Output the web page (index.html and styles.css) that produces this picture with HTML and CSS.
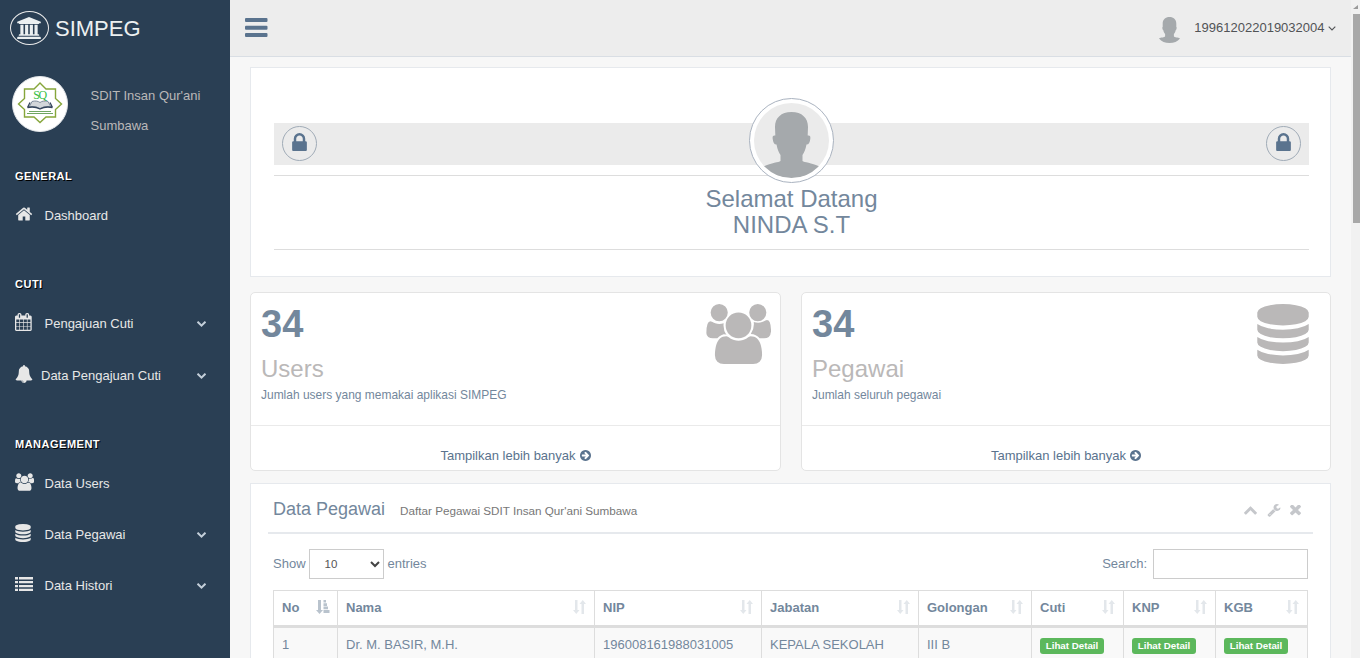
FILE: index.html
```
<!DOCTYPE html>
<html lang="id">
<head>
<meta charset="utf-8">
<title>SIMPEG</title>
<link rel="stylesheet" href="styles.css">
</head>
<body>
<svg class="sprite" width="0" height="0">
  <symbol id="bank" viewBox="0 0 1920 1792"><path d="M960 0l960 384v128h-128q0 26-20.500 45t-48.500 19h-1526q-28 0-48.500-19t-20.500-45h-128v-128zm-704 640h256v768h128v-768h256v768h128v-768h256v768h128v-768h256v768h59q28 0 48.500 19t20.500 45v64h-1664v-64q0-26 20.500-45t48.500-19h59v-768zm1595 960q28 0 48.500 19t20.500 45v128h-1920v-128q0-26 20.500-45t48.500-19h1782z"/></symbol>
  <symbol id="home" viewBox="0 0 1792 1792"><path d="M1472 992v480q0 26-19 45t-45 19h-384v-384h-256v384h-384q-26 0-45-19t-19-45v-480q0-1 .5-3t.5-3l575-474 575 474q1 2 1 6zm223-69l-62 74q-8 9-21 11h-3q-13 0-21-7l-692-577-692 577q-12 8-24 7-13-2-21-11l-62-74q-8-10-7-23.500t11-21.500l719-599q32-26 76-26t76 26l244 204v-195q0-14 9-23t23-9h192q14 0 23 9t9 23v408l219 182q10 8 11 21.500t-7 23.500z"/></symbol>
  <symbol id="calendar" viewBox="64 0 1792 1792"><path d="M192 1664h288v-288h-288v288zm352 0h320v-288h-320v288zm-352-352h288v-320h-288v320zm352 0h320v-320h-320v320zm-352-384h288v-288h-288v288zm736 736h320v-288h-320v288zm-384-736h320v-288h-320v288zm768 736h288v-288h-288v288zm-384-352h320v-320h-320v320zm-352-864v-288q0-13-9.500-22.500t-22.500-9.500h-64q-13 0-22.500 9.500t-9.500 22.500v288q0 13 9.500 22.500t22.500 9.500h64q13 0 22.500-9.500t9.500-22.500zm736 864h288v-320h-288v320zm-384-384h320v-288h-320v288zm384 0h288v-288h-288v288zm32-480v-288q0-13-9.500-22.500t-22.500-9.500h-64q-13 0-22.500 9.500t-9.500 22.500v288q0 13 9.500 22.500t22.500 9.500h64q13 0 22.500-9.500t9.500-22.500zm384-64v1280q0 52-38 90t-90 38h-1408q-52 0-90-38t-38-90v-1280q0-52 38-90t90-38h128v-96q0-66 47-113t113-47h64q66 0 113 47t47 113v96h384v-96q0-66 47-113t113-47h64q66 0 113 47t47 113v96h128q52 0 90 38t38 90z"/></symbol>
  <symbol id="bell" viewBox="0 0 1792 1792"><path d="M912 1696q0-16-16-16-59 0-101.500-42.500t-42.500-101.500q0-16-16-16t-16 16q0 73 51.500 124.500t124.500 51.500q16 0 16-16zm816-288q0 52-38 90t-90 38h-448q0 106-75 181t-181 75-181-75-75-181h-448q-52 0-90-38t-38-90q50-42 91-88t85-119.500 74.500-158.500 50-206 19.500-260q0-152 117-282.500t307-158.500q-8-19-8-39 0-40 28-68t68-28 68 28 28 68q0 20-8 39 190 28 307 158.500t117 282.500q0 139 19.500 260t50 206 74.500 158.500 85 119.500 91 88z"/></symbol>
  <symbol id="users" viewBox="0 0 1920 1792"><path d="M593 896q-162 5-265 128h-134q-82 0-138-40.500t-56-118.500q0-353 124-353 6 0 43.500 21t97.500 42.500 119 21.500q67 0 133-23-5 37-5 66 0 159 93 293zm1071 637q0 120-73 189.500t-194 69.500h-874q-121 0-194-69.500t-73-189.500q0-53 3.500-103.500t14-109 26.500-108.500 43-97.500 62-81 85.500-53.500 111.500-20q10 0 43 21.500t73 48 107 48 135 21.500 135-21.500 107-48 73-48 43-21.500q61 0 111.500 20t85.500 53.500 62 81 43 97.500 26.500 108.500 14 109 3.500 103.500zm-1024-1277q0 106-75 181t-181 75-181-75-75-181 75-181 181-75 181 75 75 181zm704 384q0 159-112.500 271.500t-271.500 112.500-271.500-112.500-112.500-271.500 112.500-271.500 271.500-112.500 271.500 112.500 112.500 271.500zm576 225q0 78-56 118.500t-138 40.500h-134q-103-123-265-128 93-134 93-293 0-29-5-66 66 23 133 23 59 0 119-21.500t97.500-42.500 43.500-21q124 0 124 353zm-128-609q0 106-75 181t-181 75-181-75-75-181 75-181 181-75 181 75 75 181z"/></symbol>
  <symbol id="database" viewBox="128 0 1536 1792"><path d="M896 768q237 0 443-43t325-127v170q0 69-103 128t-280 93.500-385 34.500-385-34.500-280-93.500-103-128v-170q119 84 325 127t443 43zm0 768q237 0 443-43t325-127v170q0 69-103 128t-280 93.500-385 34.500-385-34.500-280-93.500-103-128v-170q119 84 325 127t443 43zm0-384q237 0 443-43t325-127v170q0 69-103 128t-280 93.500-385 34.500-385-34.500-280-93.500-103-128v-170q119 84 325 127t443 43zm0-1152q208 0 385 34.500t280 93.500 103 128v128q0 69-103 128t-280 93.500-385 34.500-385-34.500-280-93.500-103-128v-128q0-69 103-128t280-93.500 385-34.500z"/></symbol>
  <symbol id="list" viewBox="0 0 18 18"><path d="M0 2h3v2.500H0zM4 2h14v2.500H4zM0 6h3v2.300H0zM4 6h14v2.300H4zM0 10h3v2.200H0zM4 10h14v2.200H4zM0 13.700h3V16H0zM4 13.700h14V16H4z"/></symbol>
  <symbol id="lock" viewBox="320 128 1152 1408"><path d="M640 768h512v-192q0-106-75-181t-181-75-181 75-75 181v192zm832 96v576q0 40-28 68t-68 28h-960q-40 0-68-28t-28-68v-576q0-40 28-68t68-28h32v-192q0-184 132-316t316-132 316 132 132 316v192h32q40 0 68 28t28 68z"/></symbol>
  <symbol id="chevron" viewBox="90 460 1612 1070"><path d="M1683 1331l-166 165q-19 19-45 19t-45-19l-531-531-531 531q-19 19-45 19t-45-19l-166-165q-19-19-19-45.500t19-45.500l742-741q19-19 45-19t45 19l742 741q19 19 19 45.500t-19 45.500z"/></symbol>
  <symbol id="wrench" viewBox="0 0 1792 1792"><path d="M448 1472q0-26-19-45t-45-19-45 19-19 45 19 45 45 19 45-19 19-45zm644-420l-682 682q-37 37-90 37-52 0-91-37l-106-108q-38-36-38-90 0-53 38-91l681-681q39 98 114.500 173.500t173.500 114.500zm634-435q0 39-23 106-47 134-164.500 217.500t-258.500 83.500q-185 0-316.500-131.500t-131.500-316.500 131.500-316.500 316.500-131.500q58 0 121.500 16.500t107.500 46.500q16 11 16 28t-16 28l-293 169v224l193 107q5-3 79-48.500t135.500-81 70.500-35.500q15 0 23.500 10t8.500 25z"/></symbol>
  <symbol id="times" viewBox="300 430 1192 1192"><path d="M1490 1322q0 40-28 68l-136 136q-28 28-68 28t-68-28l-294-294-294 294q-28 28-68 28t-68-28l-136-136q-28-28-28-68t28-68l294-294-294-294q-28-28-28-68t28-68l136-136q28-28 68-28t68 28l294 294 294-294q28-28 68-28t68 28l136 136q28 28 28 68t-28 68l-294 294 294 294q28 28 28 68z"/></symbol>
  <symbol id="go" viewBox="128 128 1536 1536"><path d="M1413 896q0-27-18-45l-362-362-91-91q-18-18-45-18t-45 18l-91 91q-18 18-18 45t18 45l189 189h-502q-26 0-45 19t-19 45v128q0 26 19 45t45 19h502l-189 189q-19 19-19 45t19 45l91 91q18 18 45 18t45-18l91-91 362-362q18-18 18-45zm251 0q0 209-103 385.500t-279.500 279.500-385.500 103-385.500-103-279.500-279.500-103-385.500 103-385.500 279.500-279.500 385.500-103 385.500 103 279.500 279.500 103 385.500z"/></symbol>
  <symbol id="sort" viewBox="0 0 13 14"><path d="M2 0h2.500v10H6.500L3.250 14 0 10h2zM8.500 14H11V4h2L9.750 0 6.500 4h2z"/></symbol>
  <symbol id="sort-asc" viewBox="0 0 14 14"><path d="M2 0h3v10h2L3.500 14 0 10h2zM7.500 0H10v2.600H7.500zM7.500 3.300h3.500v2.600H7.500zM7.500 6.600h4.500v2.700H7.500zM7.500 10h6v3H7.500z"/></symbol>
  <symbol id="person" viewBox="0 0 75 75"><path d="M37.500 9C27 9 21 15 21 24l.3 8.500c-2.300-.3-3 .7-2.600 3.500.5 3.500 1.300 5.500 3.800 5.500 1 5 2.300 8 4 10.500V58c-1.500 1.500-9 1.500-17 5.500C17 72 27 75 37.500 75S58 72 65.500 63.500c-8-4-15.500-4-17-5.500v-6c1.700-2.500 3-5.500 4-10.500 2.500 0 3.300-2 3.800-5.500.4-2.800-.3-3.800-2.600-3.500L54 24c0-9-6-15-16.500-15z"/></symbol>
</svg>

<aside class="sidebar">
  <div class="brand">
    <span class="brand-mark"><svg class="i-bank"><use href="#bank"/></svg></span>
    <span>SIMPEG</span>
  </div>
  <div class="school">
    <svg class="school-logo" viewBox="0 0 56 56">
      <circle cx="28" cy="28" r="27.500" fill="#fff" stroke="#e3e6e9"/>
      <path d="M28 7l6 6h9.500v9.500l6 5.500-6 5.500V41H34l-6 5.500-6-5.500h-9.500v-7.500l-6-5.500 6-5.500V13H22z" fill="none" stroke="#86a63a" stroke-width="1.400"/>
      <text x="27.500" y="23" class="logo-letters">SQ</text>
      <path d="M20 25.500c3-1 6-.5 8 1 2-1.500 5-2 8-1l3 5.500c-4-1-8 0-11 1.500-3-1.500-7-2.500-11-1.500z" fill="#d3d6da" stroke="#66758a" stroke-width=".8"/>
      <path d="M15.500 31.500c5-1 9-.5 12.500 1.500 3.500-2 7.500-2.500 12.500-1.500M18 26.500l-2.500 5M38 26.500l2.500 5" fill="none" stroke="#34445c" stroke-width="1.300"/>
      <path d="M17 35.500h22M15 37.500h26" stroke="#6fa662" stroke-width="1.200"/>
    </svg>
    <p class="school-name">SDIT Insan Qur'ani<br>Sumbawa</p>
  </div>
  <nav>
    <section class="menu">
      <h3>GENERAL</h3>
      <a class="item"><svg class="i18"><use href="#home"/></svg><span>Dashboard</span></a>
    </section>
    <section class="menu">
      <h3>CUTI</h3>
      <a class="item"><svg class="i18"><use href="#calendar"/></svg><span>Pengajuan Cuti</span><svg class="caret"><use href="#chevron"/></svg></a>
      <a class="item tight"><svg class="i18"><use href="#bell"/></svg><span>Data Pengajuan Cuti</span><svg class="caret"><use href="#chevron"/></svg></a>
    </section>
    <section class="menu">
      <h3>MANAGEMENT</h3>
      <a class="item"><svg class="i18 wide"><use href="#users"/></svg><span>Data Users</span></a>
      <a class="item"><svg class="i18 slim"><use href="#database"/></svg><span>Data Pegawai</span><svg class="caret"><use href="#chevron"/></svg></a>
      <a class="item"><svg class="i18"><use href="#list"/></svg><span>Data Histori</span><svg class="caret"><use href="#chevron"/></svg></a>
    </section>
  </nav>
</aside>

<div class="page">
  <header class="topbar">
    <svg class="burger" viewBox="0 0 23 20"><rect width="22.500" height="4" rx="1"/><rect y="7.700" width="22.500" height="4" rx="1"/><rect y="15" width="22.500" height="4" rx="1"/></svg>
    <div class="account">
      <svg class="account-photo" viewBox="0 0 21 26"><path d="M10.500 0C6.500 0 3.700 2.500 3.700 6.500v3.300c-.6.200-.5 2.700.6 3.500.4 1.700 1 2.800 1.800 3.700v2.300C5.500 20.800 2 20.300 0 21.500 2.500 24.500 6 26 10.500 26S18.500 24.500 21 21.500c-2-1.200-5.500-.7-6.100-2.200V17c.8-.9 1.400-2 1.800-3.700 1.100-.8 1.200-3.300.6-3.500V6.500C17.300 2.500 14.500 0 10.500 0z"/></svg>
      <span>199612022019032004</span>
      <svg class="angle" viewBox="0 0 8 5"><path d="M.7.700L4 4 7.300.700" fill="none" stroke="#515356" stroke-width="1.100"/></svg>
    </div>
  </header>
  <main>
    <section class="panel welcome">
      <div class="band">
        <span class="lock"><svg><use href="#lock"/></svg></span>
        <span class="photo"><svg><use href="#person"/></svg></span>
        <span class="lock"><svg><use href="#lock"/></svg></span>
      </div>
      <h2>Selamat Datang<br>NINDA S.T</h2>
    </section>

    <div class="tiles">
      <section class="tile">
        <div class="tile-body">
          <div><strong>34</strong><h3>Users</h3><p>Jumlah users yang memakai aplikasi SIMPEG</p></div>
          <svg class="tile-users"><use href="#users"/></svg>
        </div>
        <a class="more">Tampilkan lebih banyak <svg><use href="#go"/></svg></a>
      </section>
      <section class="tile">
        <div class="tile-body">
          <div><strong>34</strong><h3>Pegawai</h3><p>Jumlah seluruh pegawai</p></div>
          <svg class="tile-db"><use href="#database"/></svg>
        </div>
        <a class="more">Tampilkan lebih banyak <svg><use href="#go"/></svg></a>
      </section>
    </div>

    <section class="panel data">
      <div class="data-title">
        <h2>Data Pegawai</h2><small>Daftar Pegawai SDIT Insan Qur'ani Sumbawa</small>
        <div class="tools">
          <svg class="t-up"><use href="#chevron"/></svg>
          <svg class="t-wrench"><use href="#wrench"/></svg>
          <svg class="t-x"><use href="#times"/></svg>
        </div>
      </div>
      <div class="controls">
        <span>Show</span>
        <span class="select">10<svg viewBox="0 0 10 7"><path d="M1 1l4 4 4-4" fill="none" stroke="#444" stroke-width="2"/></svg></span>
        <span>entries</span>
        <label class="search">Search: <input type="text"></label>
      </div>
      <table>
        <colgroup><col class="c-no"><col class="c-nama"><col class="c-nip"><col class="c-jabatan"><col class="c-gol"><col class="c-act"><col class="c-act"><col></colgroup>
        <thead>
          <tr>
            <th><div>No<svg class="asc"><use href="#sort-asc"/></svg></div></th>
            <th><div>Nama<svg><use href="#sort"/></svg></div></th>
            <th><div>NIP<svg><use href="#sort"/></svg></div></th>
            <th><div>Jabatan<svg><use href="#sort"/></svg></div></th>
            <th><div>Golongan<svg><use href="#sort"/></svg></div></th>
            <th><div>Cuti<svg><use href="#sort"/></svg></div></th>
            <th><div>KNP<svg><use href="#sort"/></svg></div></th>
            <th><div>KGB<svg><use href="#sort"/></svg></div></th>
          </tr>
        </thead>
        <tbody>
          <tr>
            <td>1</td><td>Dr. M. BASIR, M.H.</td><td>196008161988031005</td><td>KEPALA SEKOLAH</td><td>III B</td>
            <td><span class="badge">Lihat Detail</span></td><td><span class="badge">Lihat Detail</span></td><td><span class="badge">Lihat Detail</span></td>
          </tr>
        </tbody>
      </table>
    </section>
  </main>
</div>

<div class="scroll"><span class="scroll-up"></span><span class="scroll-thumb"></span></div>
</body>
</html>
```

FILE: styles.css
```
* { box-sizing: border-box; }
body {
  margin: 0; height: 658px; overflow: hidden; display: flex;
  font: 13px/18px "Liberation Sans", Arial, sans-serif;
  color: #73879c; background: #f7f7f7;
}
h2, h3, p { margin: 0; font-weight: 400; }
svg { display: block; flex: none; fill: currentColor; }
.sprite { position: absolute; }

/* Sidebar */
.sidebar { width: 230px; flex: none; background: #2a3f54; color: #e7e7e7; }
.brand { display: flex; align-items: center; gap: 6px; height: 56px; padding-left: 10px; font-size: 22px; line-height: 26px; color: #ecf0f1; }
.brand > span:last-child { padding-top: 1px; }
.brand-mark { width: 39px; height: 34px; border: 1px solid #eaeaea; border-radius: 50%; display: flex; align-items: center; justify-content: center; }
.i-bank { width: 24px; height: 22px; margin: 0 1px 0 0; }
.school { display: flex; align-items: flex-start; height: 90px; padding: 20px 0 0 12px; }
.school-logo { width: 56px; height: 56px; }
.logo-letters { font: 12px "Liberation Serif", serif; fill: #35c045; text-anchor: middle; letter-spacing: -1.500px; }
.school-name { margin: 5px 0 0 22.500px; line-height: 30px; color: #bab8b8; }
nav { padding-top: 20px; }
.menu { margin-bottom: 33px; }
.menu h3 { height: 20px; margin-bottom: 4px; padding-left: 15px; font: bold 11px/20px "Liberation Sans", Arial, sans-serif; letter-spacing: .5px; color: #fff; text-shadow: 1px 1px #000; }
.item { display: flex; align-items: center; height: 51px; padding: 0 24px 0 15px; }
.item + .item.tight { margin-top: 1px; }
.item span { flex: 1; margin-left: 11.500px; }
.item.tight span { margin-left: 8px; }
.i18 { width: 18px; height: 18px; margin-bottom: 4px; }
.i18.wide { width: 19px; margin-right: -1px; }
.i18.slim { width: 16px; margin-right: 2px; }
.caret { width: 9px; height: 6px; transform: rotate(180deg); color: #c4cfda; }

/* Top bar */
.page { flex: 1; min-width: 0; }
.topbar { height: 57px; background: #ededed; border-bottom: 1px solid #d9dee4; display: flex; align-items: center; justify-content: space-between; padding: 0 15px; }
.burger { width: 23px; height: 20px; color: #5a738e; }
.account { display: flex; align-items: center; color: #515356; }
.account-photo { width: 21px; height: 26px; margin: 3px 14.500px 0 0; color: #a5a9ac; }
.angle { width: 8px; height: 5px; margin-left: 3.500px; }

main { padding: 10px 20px 0; }
.panel { background: #fff; border: 1px solid #e6e9ed; }

/* Welcome */
.welcome { height: 210px; padding: 55px 21px 0 23px; }
.band { height: 42px; padding: 0 8px; background: #ebebeb; display: flex; align-items: center; justify-content: space-between; }
.lock { width: 35px; height: 35px; margin-top: -2px; border: 1px solid #a0abb7; border-radius: 50%; display: flex; justify-content: center; padding-top: 6px; color: #5a738e; }
.lock svg { width: 15px; height: 18px; }
.photo { width: 85px; height: 85px; margin: -22px 0; padding: 4px; border: 1px solid #aab3c0; border-radius: 50%; background: #fff; z-index: 1; transform: translateY(-4px); }
.photo svg { width: 75px; height: 75px; border-radius: 50%; background: #ebebeb; color: #a5a9ac; }
.welcome h2 { margin-top: 10px; height: 75px; padding-top: 10px; border: solid #ddd; border-width: 1px 0; font-size: 24px; line-height: 26px; text-align: center; }

/* Tiles */
.tiles { display: grid; grid-template-columns: 531px 530px; gap: 20px; margin-top: 15px; }
.tile { height: 179px; background: #fff; border: 1px solid #e4e4e4; border-radius: 5px; }
.tile-body { display: flex; justify-content: space-between; height: 133px; padding: 10px 9px 0 10px; border-bottom: 1px solid #eaeaea; }
.tile strong { display: block; font-size: 38px; line-height: 42px; }
.tile h3 { margin-top: 11px; font-size: 24px; line-height: 26px; color: #bab8b8; }
.tile p { margin-top: 5px; font-size: 11.980px; line-height: 17px; }
.tile-users, .tile-db { height: 60px; margin-top: .5px; color: #bab8b8; }
.tile-users { width: 65px; }
.tile-db { width: 52px; margin-right: 12px; }
.more { display: flex; justify-content: center; align-items: center; gap: 4px; height: 44px; padding-top: 15px; color: #5a738e; }
.more svg { width: 11px; height: 11px; }

/* Employee table */
.data { margin-top: 12px; padding: 0 17px; height: 175px; border-bottom: 0; overflow: hidden; }
.data-title { display: flex; align-items: center; height: 50px; padding: 0 12px 0 5px; border-bottom: 2px solid #e6e9ed; }
.data-title h2 { padding-top: 2px; font-size: 18px; }
.data-title small { margin: 5px 0 0 15px; font-size: 11.700px; color: #777; }
.tools { display: flex; align-items: center; margin: 5px 0 0 auto; color: #c5c7cb; }
.t-up { width: 13px; height: 9px; }
.t-wrench { width: 14px; height: 14px; margin: -2px 0 0 10px; }
.t-x { width: 11px; height: 11px; margin-left: 9px; }
.controls { display: flex; align-items: center; height: 30px; margin: 15px 5px 11px; }
.select { display: flex; align-items: center; justify-content: space-between; width: 75px; height: 30px; margin: 0 4px 0 3px; padding: 0 3px 0 15px; border: 1px solid #ccc; font-size: 11.500px; color: #555; }
.select svg { width: 10px; height: 7px; }
.search { margin-left: auto; display: flex; align-items: center; gap: 6px; }
.search input { width: 155px; height: 30px; border: 1px solid #ccc; padding: 0; }
table { width: 1035px; margin-left: 5px; table-layout: fixed; border-spacing: 0; border: solid #ddd; border-width: 1px 1px 0 0; }
.c-no { width: 64px; } .c-nama { width: 257px; } .c-nip { width: 167px; } .c-jabatan { width: 157px; } .c-gol { width: 113px; } .c-act { width: 92px; }
th, td { border-left: 1px solid #ddd; padding: 0 8px; text-align: left; white-space: nowrap; }
th { height: 37px; border-bottom: 3px solid #ddd; }
th div { display: flex; align-items: center; justify-content: space-between; }
th svg { width: 13px; height: 14px; margin-top: -2px; color: #e3e7eb; }
th svg.asc { width: 14px; color: #b9c3cd; margin-right: -1px; }
td { height: 30px; padding-top: 3px; background: #f9f9f9; vertical-align: top; line-height: 27px; }
td:nth-child(n+6) { padding-top: 10px; }
.badge { display: block; width: 64px; height: 16px; border-radius: 3px; background: #5cb85c; color: #fff; font: bold 9.750px/16px "Liberation Sans", Arial, sans-serif; text-align: center; }

/* Scrollbar */
.scroll { width: 9px; flex: none; background: #f1f1f1; padding-left: 2px; }
.scroll-up { display: block; width: 0; height: 9px; margin-bottom: 5px; border: solid transparent; border-width: 5px 0 0 5px; border-bottom: 4px solid #9a9a9a; }
.scroll-thumb { display: block; height: 209px; background: #a8a8a8; }
```
